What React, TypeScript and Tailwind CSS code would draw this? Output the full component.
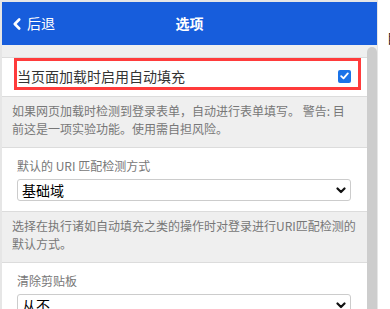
import { ReactNode } from 'react'

const FONT = '"Noto Sans CJK SC", "Noto Sans", sans-serif'

const ChevronDown = () => (
  <svg width="10" height="7" viewBox="0 0 10 7" fill="none">
    <polyline points="1.5,1.5 5,5 8.5,1.5" stroke="#111" strokeWidth="2.2" strokeLinecap="round" strokeLinejoin="round" />
  </svg>
)

const Select = ({ value }: { value: string }) => (
  <div className="mt-[4px] flex h-[22px] items-center justify-between rounded-[3px] border border-[#cccccc] bg-white pl-[4px] pr-[4px] text-[14px] text-black">
    <span>{value}</span>
    <ChevronDown />
  </div>
)

const Help = ({ children }: { children: ReactNode }) => (
  <p className="pb-[9px] pl-[10px] pr-[5px] pt-[5px] text-[12px] leading-[18px] text-[#777777]">{children}</p>
)

const SelectSection = ({ label, value }: { label: string; value: string }) => (
  <section className="border-y border-[#dcdcdc] bg-white pb-[10px] pl-[15px] pr-[16px] pt-[9px]">
    <label className="block text-[12px] leading-[18px] text-[#777777]">{label}</label>
    <Select value={value} />
  </section>
)

const App = () => {
  return (
    <div className="flex h-[309px] w-[390px] overflow-hidden bg-white" style={{ fontFamily: FONT }}>
      <div className="flex w-[378px] flex-col border-l-2 border-r border-t-2 border-[#e6e6e6] bg-[#efefef]">
        <header className="relative flex h-[43px] shrink-0 items-center bg-[#175ddc] pl-[11px] text-white">
          <div className="flex items-center gap-[6px] text-[14px]">
            <svg width="8" height="12" viewBox="0 0 8 12" fill="none">
              <polyline points="6.2,1.5 1.8,6 6.2,10.5" stroke="white" strokeWidth="2.6" strokeLinecap="round" strokeLinejoin="round" />
            </svg>
            <span>后退</span>
          </div>
          <h1 className="absolute left-1/2 -translate-x-1/2 text-[14px] font-bold">选项</h1>
        </header>

        <div className="flex min-h-0 flex-1">
          <main className="flex-1 overflow-hidden pt-[12px]">
            <section className="border-y border-[#dcdcdc] bg-white pb-[6px] pl-[12px] pr-[6px]">
              <div className="flex h-[32px] items-center justify-between border-[3px] border-[#ff3b3b] pr-[7px] pt-[4px]">
                <span className="text-[14px] text-[#333333]">当页面加载时启用自动填充</span>
                <span className="flex h-[13px] w-[13px] items-center justify-center rounded-[2px] bg-[#1a73e8]">
                  <svg width="9" height="8" viewBox="0 0 9 8" fill="none">
                    <polyline points="1.2,4.2 3.5,6.4 7.8,1.4" stroke="white" strokeWidth="1.8" strokeLinecap="round" strokeLinejoin="round" />
                  </svg>
                </span>
              </div>
            </section>
            <Help>
              如果网页加载时检测到登录表单，自动进行表单填写。 警告: 目
              <br />
              前这是一项实验功能。使用需自担风险。
            </Help>

            <SelectSection label="默认的 URI 匹配检测方式" value="基础域" />
            <Help>选择在执行诸如自动填充之类的操作时对登录进行URI匹配检测的默认方式。</Help>

            <SelectSection label="清除剪贴板" value="从不" />
          </main>
          <div className="w-[10px] shrink-0 pt-[2px]">
            <div className="h-full rounded-t-[5px] bg-[#cdcdcd]" />
          </div>
        </div>
      </div>
      <div className="flex-1 overflow-hidden pl-[9px] pt-[28px] text-[13px] text-[#222222]">
        <span className="whitespace-nowrap">目</span>
      </div>
    </div>
  )
}

export default App
